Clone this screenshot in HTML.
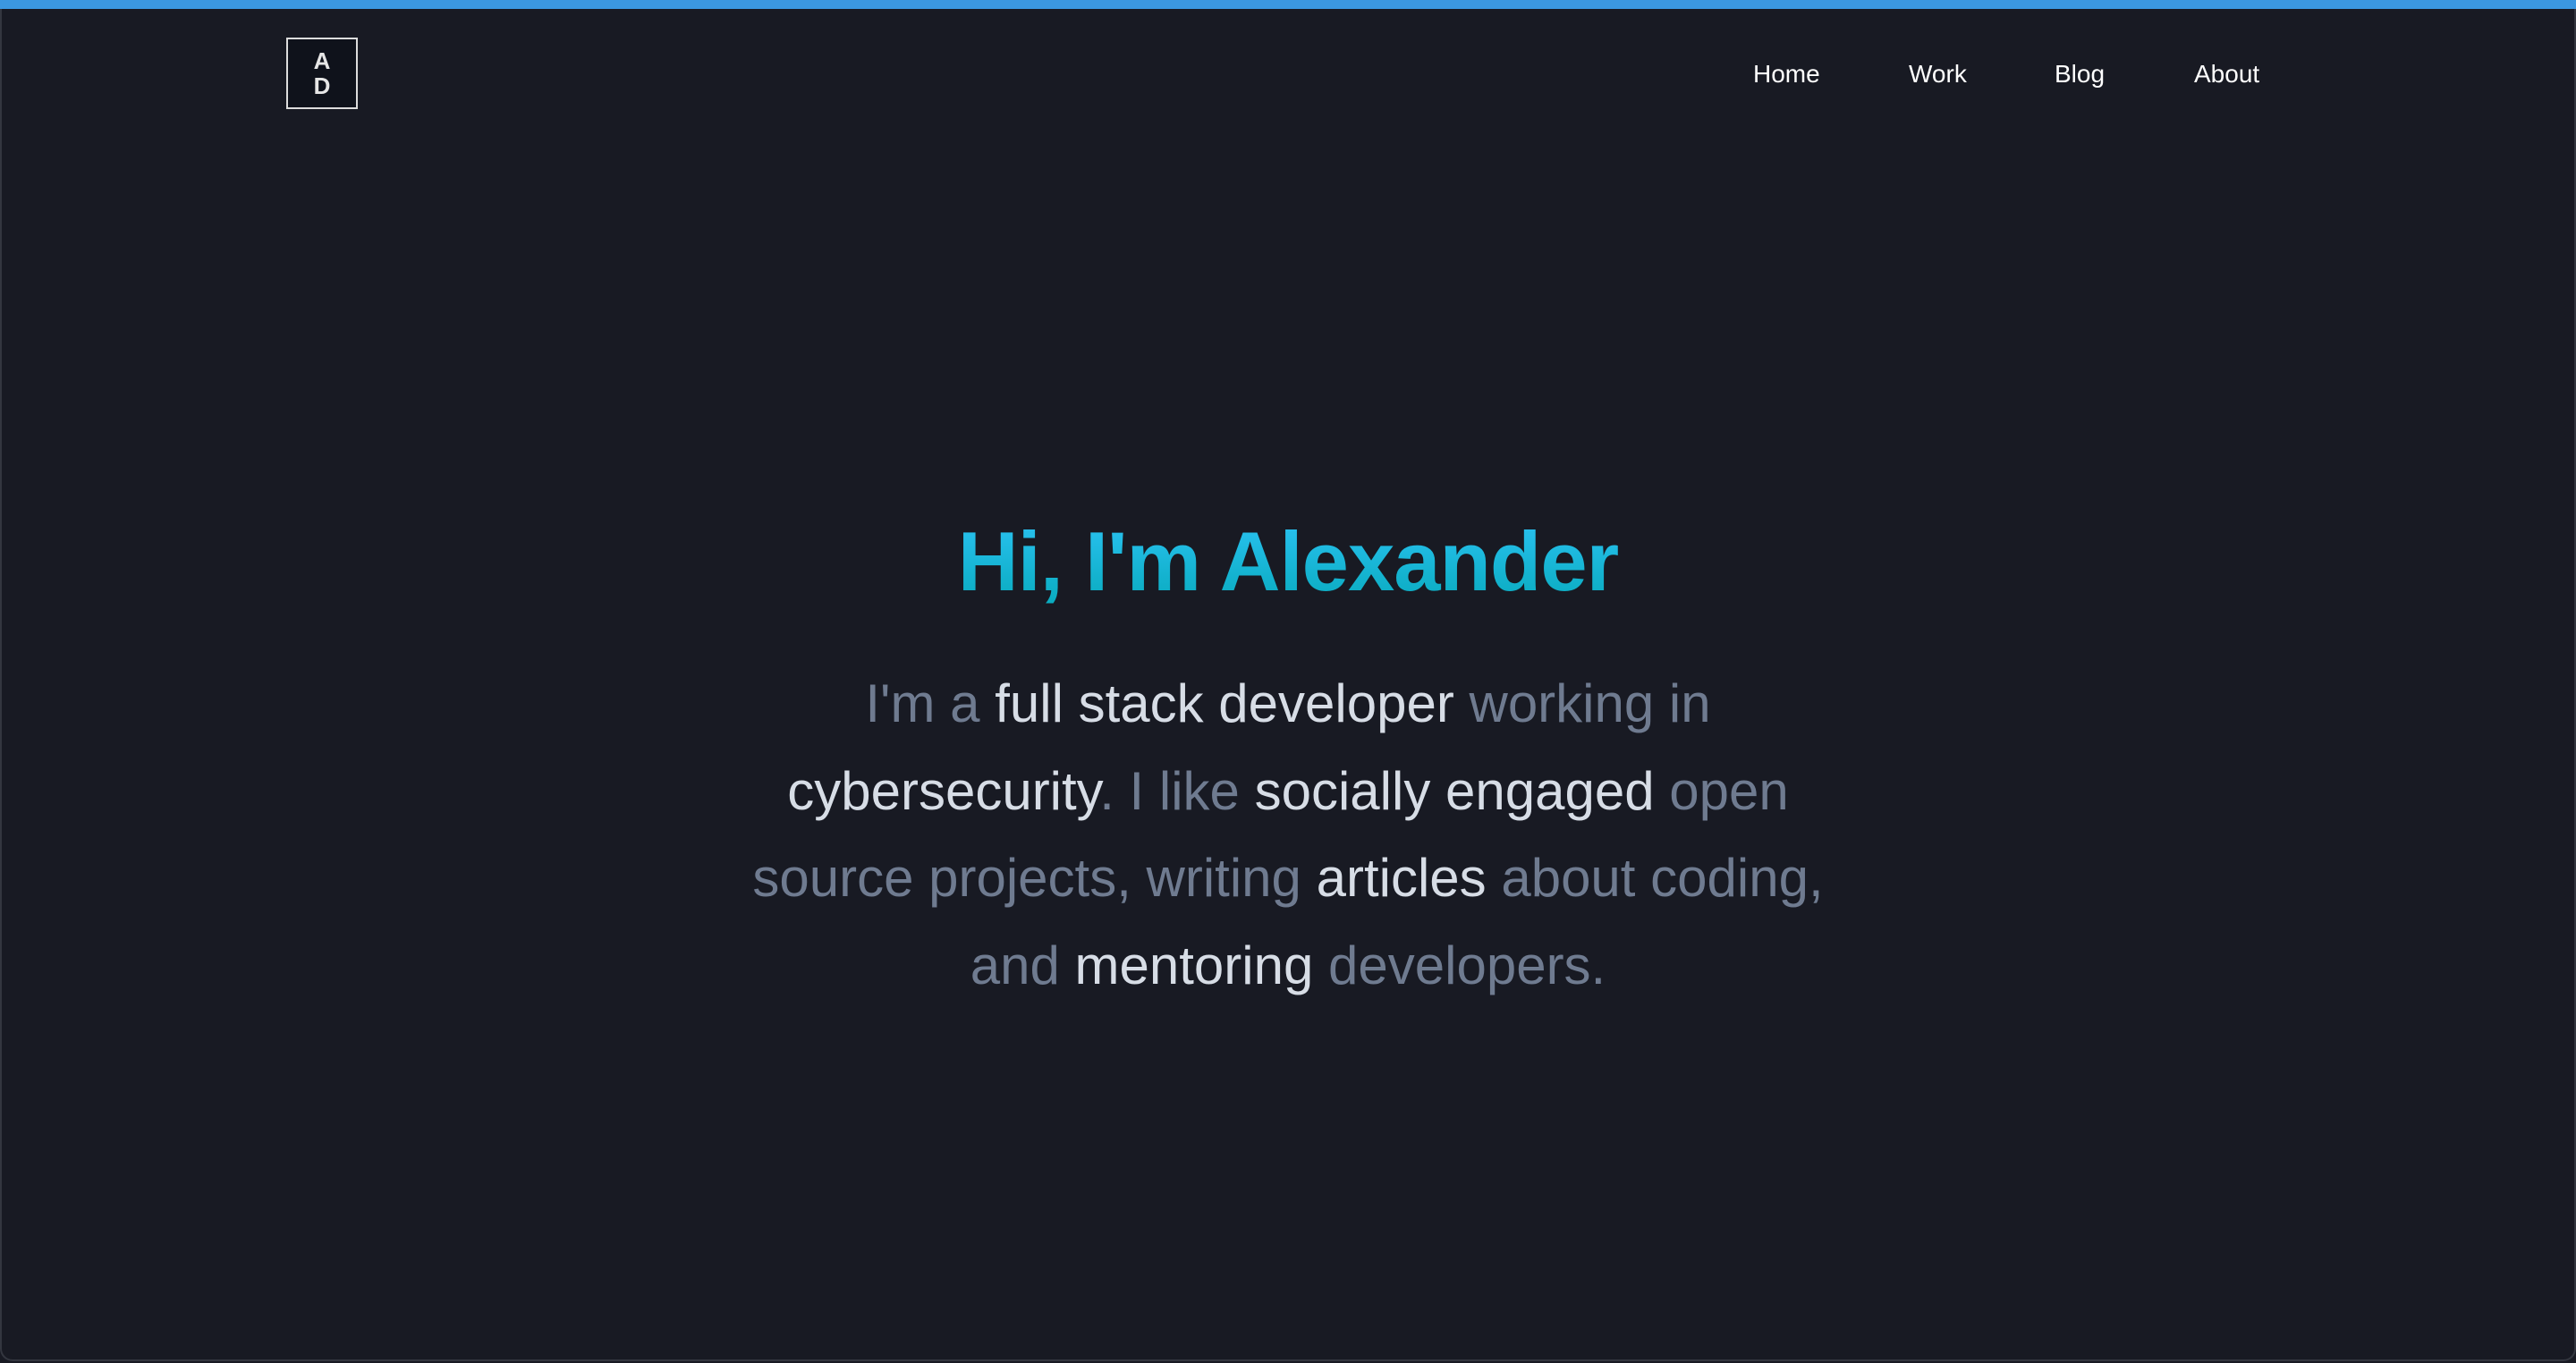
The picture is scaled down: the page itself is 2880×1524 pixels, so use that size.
<!DOCTYPE html>
<html><head><meta charset="utf-8"><style>
html,body{margin:0;padding:0}
body{width:2880px;height:1524px;background:#181a23;position:relative;overflow:hidden;font-family:"Liberation Sans",sans-serif}
.frame{position:absolute;left:0;top:0;width:2876px;height:1520px;border:2px solid #33363f;border-top:none;border-radius:0 0 14px 14px}
.bar{position:absolute;left:0;top:0;width:2880px;height:10px;background:#3b97e0}
.logo{position:absolute;left:320px;top:42px;width:76px;height:76px;border:2px solid #dcdcdc;background:#0f121b;color:#e6e6e6;font-weight:bold;font-size:26px;line-height:28px;text-align:center;display:flex;flex-direction:column;justify-content:center}
.nav a{position:absolute;top:67px;color:#fff;font-size:28px;text-decoration:none}
h1{position:absolute;left:0;width:2880px;top:568px;margin:0;text-align:center;font-size:94px;font-weight:bold;letter-spacing:-1px;line-height:120px;background:linear-gradient(180deg,#2ec5f8,#05a8b8);-webkit-background-clip:text;background-clip:text;color:transparent}
p{position:absolute;left:0;width:2880px;top:738px;margin:0;text-align:center;font-size:60px;line-height:97.5px;color:#6f7b90;white-space:nowrap}
p b{font-weight:normal;color:#d7dde6}
</style></head><body>
<div class="frame"></div>
<div class="bar"></div>
<div class="logo"><div>A</div><div>D</div></div>
<div class="nav"><a style="left:1960px">Home</a><a style="left:2134px">Work</a><a style="left:2297px">Blog</a><a style="left:2453px">About</a></div>
<h1>Hi, I'm Alexander</h1>
<p>I'm a <b>full stack developer</b> working in<br><b>cybersecurity</b>. I like <b>socially engaged</b> open<br>source projects, writing <b>articles</b> about coding,<br>and <b>mentoring</b> developers.</p>
</body></html>
